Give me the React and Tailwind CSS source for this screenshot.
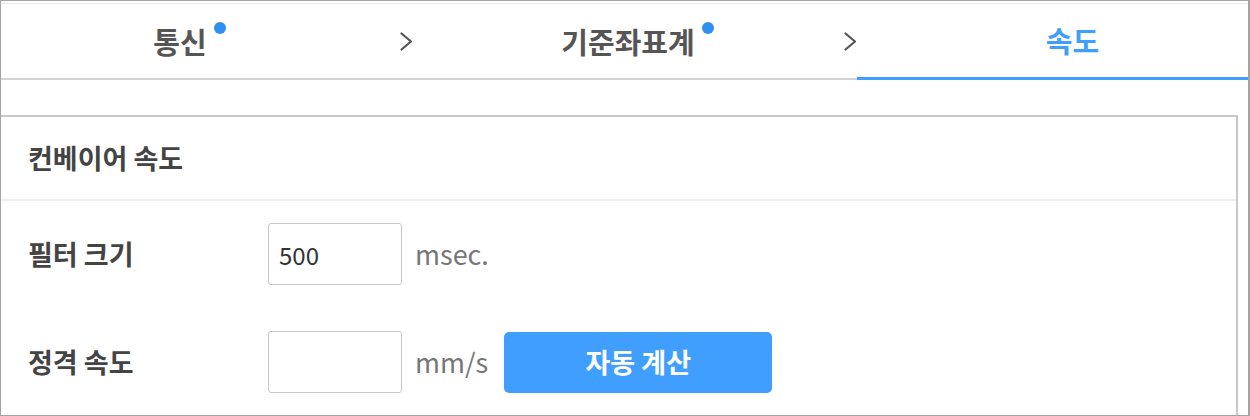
import { useState } from 'react';

const FONT = { fontFamily: '"Noto Sans CJK KR", "Noto Sans", sans-serif' };

function Chevron() {
  return (
    <svg width="13" height="19" viewBox="0 0 13 19" fill="none">
      <polyline points="1.5,1.5 11,9.5 1.5,17.5" stroke="#555" strokeWidth="2.2" strokeLinecap="round" strokeLinejoin="round" />
    </svg>
  );
}

function TabLabel({ label, dot, active }) {
  return (
    <span className={`relative text-[29px] font-semibold leading-none ${active ? 'text-[#409eff]' : 'text-[#555]'}`}>
      {label}
      {dot && <span className="absolute -right-[19px] -top-[5px] w-[12px] h-[12px] rounded-full bg-[#2f8ff0]" />}
    </span>
  );
}

export default function App() {
  const [filter, setFilter] = useState('500');
  const [speed, setSpeed] = useState('');

  return (
    <div style={FONT} className="w-[1250px] h-[416px] overflow-hidden bg-white border border-r-2 border-[#a3a3a3] flex flex-col">
      {/* Steps */}
      <div className="h-[77px] flex border-t border-[#ececec] border-b-2 border-b-[#d4d4d4] mt-[2px]">
        <div className="w-[358px] flex items-center justify-center">
          <TabLabel label="통신" dot />
        </div>
        <div className="w-[94px] flex items-center justify-center">
          <Chevron />
        </div>
        <div className="w-[350px] flex items-center justify-center">
          <TabLabel label="기준좌표계" dot />
        </div>
        <div className="w-[54px] flex items-center justify-end">
          <Chevron />
        </div>
        <div className="flex-1 flex items-center justify-center pl-[40px] border-b-[3px] border-[#409eff] -mb-[2px]">
          <TabLabel label="속도" active />
        </div>
      </div>

      {/* Card */}
      <div className="mt-[35px] mr-[10px] flex-1 border-t-2 border-r-2 border-[#c8c8c8]">
        <div className="h-[84px] flex items-center pl-[27px] border-b-2 border-[#eeeeee]">
          <span className="text-[27px] font-bold text-[#444]">컨베이어 속도</span>
        </div>

        <div className="pl-[27px] pt-[22px] flex flex-col gap-[46px]">
          <div className="flex items-center">
            <span className="w-[240px] text-[27px] font-bold text-[#444]">필터 크기</span>
            <input
              value={filter}
              onChange={(e) => setFilter(e.target.value)}
              className="w-[134px] h-[62px] border border-[#c8c8c8] rounded-[3px] pl-[10px] text-[24px] text-[#333] outline-none"
            />
            <span className="ml-[13px] text-[27px] text-[#777]">msec.</span>
          </div>

          <div className="flex items-center">
            <span className="w-[240px] text-[27px] font-bold text-[#444]">정격 속도</span>
            <input
              value={speed}
              onChange={(e) => setSpeed(e.target.value)}
              className="w-[134px] h-[62px] border border-[#c8c8c8] rounded-[3px] pl-[10px] text-[24px] text-[#333] outline-none"
            />
            <span className="ml-[13px] text-[27px] text-[#777]">mm/s</span>
            <button className="ml-[16px] w-[268px] h-[61px] rounded-[5px] bg-[#409eff] text-white text-[27px] font-semibold">
              자동 계산
            </button>
          </div>
        </div>
      </div>
    </div>
  );
}
